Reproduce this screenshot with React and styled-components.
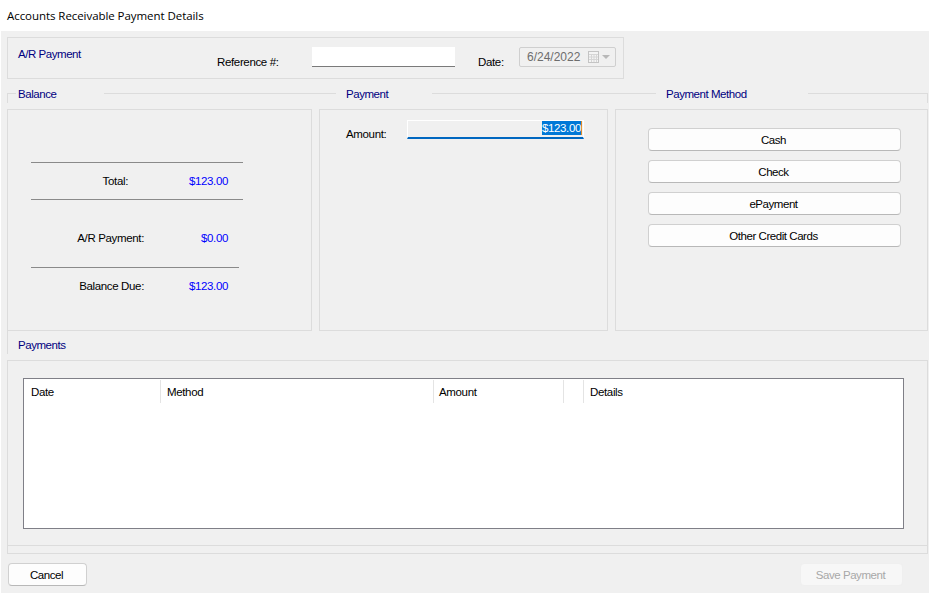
import React from 'react';
import styled, { createGlobalStyle } from 'styled-components';

const LINE = '#dcdcdc';

const GlobalStyle = createGlobalStyle`
  html, body {
    margin: 0;
    padding: 0;
    background: #fff;
  }
  body {
    font-family: 'Liberation Sans', Arial, sans-serif;
    font-size: 11.5px;
    letter-spacing: -0.35px;
    color: #000;
  }
`;

const Window = styled.div`
  width: 930px;
  height: 594px;
  display: flex;
  flex-direction: column;
  overflow: hidden;
`;

const TitleBar = styled.div`
  height: 31px;
  flex: none;
  display: flex;
  align-items: center;
  padding-left: 7px;
  font-family: 'Open Sans', 'Noto Sans', sans-serif;
  font-size: 11.5px;
  letter-spacing: -0.06px;
`;

const Body = styled.div`
  flex: 1;
  margin: 0 1px 1px 1px;
  background: #f0f0f0;
  padding: 6px 1px 0 6px;
  display: flex;
  flex-direction: column;
`;

const TopBox = styled.div`
  width: 617px;
  height: 42px;
  box-sizing: border-box;
  border: 1px solid ${LINE};
  display: flex;
  align-items: flex-start;
  padding: 9px 0 0 10px;
`;

const Heading = styled.span`
  color: #000080;
  line-height: 15px;
  letter-spacing: -0.45px;
  white-space: nowrap;
`;

const TopHeading = styled(Heading)`
  width: 199px;
  flex: none;
`;

const RefLabel = styled.span`
  margin-top: 7px;
  width: 95px;
  flex: none;
  line-height: 16px;
`;

const RefInput = styled.div`
  width: 143px;
  height: 20px;
  box-sizing: border-box;
  background: #fff;
  border-bottom: 1px solid #7a7a7a;
`;

const DateLabel = styled.span`
  margin: 7px 0 0 23px;
  width: 41px;
  flex: none;
  line-height: 16px;
`;

const DatePicker = styled.div`
  width: 97px;
  height: 20px;
  box-sizing: border-box;
  border: 1px solid #cfcfcf;
  border-radius: 2px;
  display: flex;
  align-items: center;
  padding-left: 7px;
  font-size: 12px;
  letter-spacing: 0;
  color: #6d6d6d;
  gap: 8px;
`;

const LegendRow = styled.div`
  height: 30px;
  display: flex;
  align-items: flex-start;
  padding-top: 6px;
  box-sizing: border-box;
`;

const LegendText = styled.span`
  color: #000080;
  line-height: 16px;
  letter-spacing: -0.45px;
  margin-top: 1px;
  white-space: nowrap;
  box-sizing: border-box;
  flex: none;
  width: ${(p) => p.$width}px;
  padding-left: ${(p) => p.$pad}px;
`;

const LegendLine = styled.div`
  height: 1px;
  margin-top: 8px;
  background: ${LINE};
  flex: ${(p) => (p.$width ? `0 0 ${p.$width}px` : 1)};
`;

const LegendStub = styled.div`
  width: 1px;
  height: 10px;
  margin-top: 8px;
  background: ${LINE};
`;

const Panels = styled.div`
  height: 222px;
  flex: none;
  display: flex;
  gap: 7px;
`;

const Panel = styled.div`
  box-sizing: border-box;
  width: ${(p) => p.$width}px;
  border: 1px solid ${LINE};
`;

const BalancePanel = styled(Panel)`
  padding: 52px 0 0 23px;
`;

const Rule = styled.div`
  height: 1px;
  background: #8a8a8a;
  width: ${(p) => p.$width}px;
`;

const TotalRow = styled.div`
  width: 197px;
  height: ${(p) => p.$height}px;
  box-sizing: border-box;
  padding-top: ${(p) => p.$top || 0}px;
  display: flex;
  align-items: center;
  justify-content: space-between;
`;

const RowLabel = styled.span`
  width: ${(p) => p.$width}px;
  text-align: right;
  line-height: 16px;
`;

const Money = styled.span`
  color: #0000ff;
  line-height: 16px;
`;

const AmountPanel = styled(Panel)`
  padding: 10px 0 0 26px;
  display: flex;
  align-items: flex-start;
`;

const AmountLabel = styled.span`
  width: 61px;
  flex: none;
  margin-top: 6px;
  line-height: 16px;
`;

const AmountField = styled.div`
  width: 177px;
  height: 19px;
  box-sizing: border-box;
  border: 1px solid #fff;
  border-bottom: 2px solid #0067c0;
  display: flex;
  justify-content: flex-end;
  padding-right: 1px;
  line-height: 14px;
`;

const Selected = styled.span`
  background: #0078d7;
  color: #fff;
  height: 14px;
  border-right: 1px solid #d98a2b;
`;

const MethodPanel = styled(Panel)`
  padding: 18px 0 0 32px;
  display: flex;
  flex-direction: column;
  gap: 9px;
`;

const Button = styled.button`
  width: ${(p) => p.$width}px;
  height: 23px;
  box-sizing: border-box;
  flex: none;
  background: ${(p) => (p.disabled ? '#f7f7f7' : '#fdfdfd')};
  border: 1px solid ${(p) => (p.disabled ? '#efefef' : '#d0d0d0')};
  border-bottom-color: ${(p) => (p.disabled ? '#efefef' : '#b8b8b8')};
  border-radius: 4px;
  color: ${(p) => (p.disabled ? '#a8a8a8' : '#000')};
  font: inherit;
  letter-spacing: -0.45px;
  padding: 0 2px 0 0;
`;

const PaymentsHead = styled.div`
  height: 29px;
  flex: none;
  box-sizing: border-box;
  display: flex;
  align-items: flex-start;
`;

const PaymentsEdge = styled.div`
  width: 1px;
  height: 23px;
  background: ${LINE};
`;

const PaymentsTitle = styled(Heading)`
  margin: 7px 0 0 10px;
`;

const PaymentsBox = styled.div`
  height: 185px;
  flex: none;
  box-sizing: border-box;
  border: 1px solid ${LINE};
  border-bottom: 0;
  padding: 17px 23px 0 15px;
`;

const Grid = styled.div`
  height: 151px;
  box-sizing: border-box;
  background: #fff;
  border: 1px solid #7f7f87;
`;

const GridHead = styled.div`
  display: flex;
  height: 24px;
  padding-top: 1px;
  box-sizing: border-box;
`;

const GridCol = styled.div`
  width: ${(p) => p.$width}px;
  flex: none;
  box-sizing: border-box;
  padding-left: ${(p) => p.$pad}px;
  border-right: ${(p) => (p.$last ? 0 : `1px solid #e4e4e4`)};
  line-height: 24px;
`;

const Strip = styled.div`
  height: 9px;
  flex: none;
  box-sizing: border-box;
  border: 1px solid ${LINE};
`;

const Footer = styled.div`
  display: flex;
  justify-content: space-between;
  padding: 9px 25px 0 1px;
`;

const CalendarIcon = () => (
  <svg width="24" height="12" viewBox="0 0 24 12">
    <rect x="0.5" y="0.5" width="10" height="11" fill="#f4f4f4" stroke="#c4c4c4" />
    <path d="M1 3.5h9M1 6h9M1 8.5h9M3.5 3v8M6 3v8M8.5 3v8" stroke="#d6d6d6" strokeWidth="1" />
    <path d="M14 4h8l-4 4z" fill="#b8b8b8" />
  </svg>
);

const methods = ['Cash', 'Check', 'ePayment', 'Other Credit Cards'];
const columns = [
  { label: 'Date', width: 137, pad: 7 },
  { label: 'Method', width: 273, pad: 6 },
  { label: 'Amount', width: 130, pad: 5 },
  { label: '', width: 20, pad: 0 },
  { label: 'Details', width: 300, pad: 6, last: true },
];

const App = () => {
  return (
    <Window>
      <GlobalStyle />
      <TitleBar>Accounts Receivable Payment Details</TitleBar>
      <Body>
        <TopBox>
          <TopHeading>A/R Payment</TopHeading>
          <RefLabel>Reference #:</RefLabel>
          <RefInput />
          <DateLabel>Date:</DateLabel>
          <DatePicker>
            6/24/2022
            <CalendarIcon />
          </DatePicker>
        </TopBox>

        <LegendRow>
          <LegendStub />
          <LegendLine $width={8} />
          <LegendText $width={88} $pad={2}>Balance</LegendText>
          <LegendLine $width={232} />
          <LegendText $width={96} $pad={10}>Payment</LegendText>
          <LegendLine $width={224} />
          <LegendText $width={152} $pad={10}>Payment Method</LegendText>
          <LegendLine />
          <LegendStub />
        </LegendRow>

        <Panels>
          <BalancePanel $width={305}>
            <Rule $width={212} />
            <TotalRow $height={36}>
              <RowLabel $width={97}>Total:</RowLabel>
              <Money>$123.00</Money>
            </TotalRow>
            <Rule $width={212} />
            <TotalRow $height={67} $top={9}>
              <RowLabel $width={113}>A/R Payment:</RowLabel>
              <Money>$0.00</Money>
            </TotalRow>
            <Rule $width={208} />
            <TotalRow $height={36}>
              <RowLabel $width={113}>Balance Due:</RowLabel>
              <Money>$123.00</Money>
            </TotalRow>
          </BalancePanel>

          <AmountPanel $width={289}>
            <AmountLabel>Amount:</AmountLabel>
            <AmountField>
              <Selected>$123.00</Selected>
            </AmountField>
          </AmountPanel>

          <MethodPanel $width={313}>
            {methods.map((m) => (
              <Button key={m} $width={253}>{m}</Button>
            ))}
          </MethodPanel>
        </Panels>

        <PaymentsHead>
          <PaymentsEdge />
          <PaymentsTitle>Payments</PaymentsTitle>
        </PaymentsHead>

        <PaymentsBox>
          <Grid>
            <GridHead>
              {columns.map((c) => (
                <GridCol key={c.width} $width={c.width} $pad={c.pad} $last={c.last}>
                  {c.label}
                </GridCol>
              ))}
            </GridHead>
          </Grid>
        </PaymentsBox>
        <Strip />

        <Footer>
          <Button $width={79}>Cancel</Button>
          <Button $width={103} disabled>Save Payment</Button>
        </Footer>
      </Body>
    </Window>
  );
};

export default App;
